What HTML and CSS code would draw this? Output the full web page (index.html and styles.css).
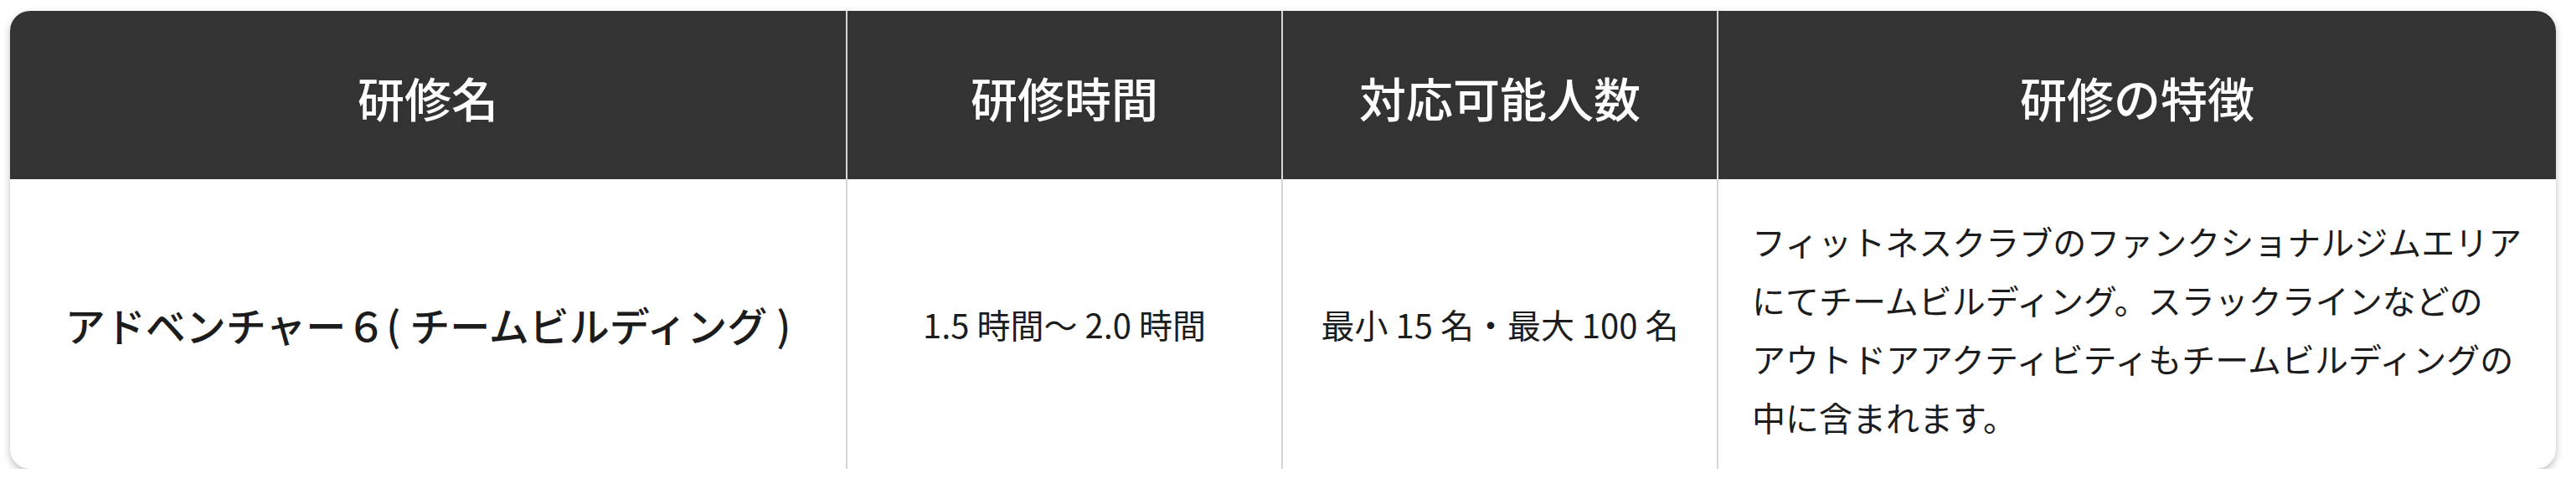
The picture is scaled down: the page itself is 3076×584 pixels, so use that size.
FILE: index.html
```html
<!DOCTYPE html>
<html lang="ja">
<head>
<meta charset="utf-8">
<title>研修一覧</title>
<link rel="stylesheet" href="styles.css">
</head>
<body>
<div class="page">
  <div class="card">
    <table class="course-table">
      <colgroup>
        <col class="col-name">
        <col class="col-time">
        <col class="col-people">
        <col class="col-feature">
      </colgroup>
      <thead>
        <tr>
          <th>研修名</th>
          <th>研修時間</th>
          <th>対応可能人数</th>
          <th>研修の特徴</th>
        </tr>
      </thead>
      <tbody>
        <tr>
          <td class="name">アドベンチャー６( チームビルディング )</td>
          <td class="meta">1.5 時間〜 2.0 時間</td>
          <td class="meta">最小 15 名・最大 100 名</td>
          <td class="feature">フィットネスクラブのファンクショナルジムエリア<br>にてチームビルディング。スラックラインなどの<br>アウトドアアクティビティもチームビルディングの<br>中に含まれます。</td>
        </tr>
      </tbody>
    </table>
  </div>
</div>
</body>
</html>
```
FILE: styles.css
```css
html, body {
  margin: 0;
  padding: 0;
  background: #ffffff;
}

body {
  font-family: "Noto Sans CJK JP", "Noto Sans", sans-serif;
  color: #1c1c1c;
}

.page {
  padding: 13px 24px 0 12px;
}

.card {
  width: 3040px;
  border-radius: 24px;
  overflow: hidden;
  background: #ffffff;
  box-shadow: 0 4px 10px rgba(0, 0, 0, 0.25);
}

.course-table {
  width: 3040px;
  border-collapse: collapse;
  border-spacing: 0;
  table-layout: fixed;
}

.col-name { width: 999px; }
.col-time { width: 520px; }
.col-people { width: 520px; }
.col-feature { width: 1001px; }

.course-table th,
.course-table td {
  padding: 0;
  text-align: center;
  vertical-align: middle;
  border-left: 2px solid #d6d6d6;
}

.course-table th:first-child,
.course-table td:first-child {
  border-left: none;
}

.course-table th {
  height: 201px;
  background: #333333;
  color: #ffffff;
  font-size: 56px;
  font-weight: 500;
  line-height: 1.4;
  padding-top: 6px;
  box-sizing: border-box;
}

.course-table td {
  height: 345px;
  box-sizing: border-box;
}

.name {
  font-size: 48px;
  font-weight: 500;
  line-height: 1.5;
}

.meta {
  font-size: 40px;
  font-weight: 400;
  line-height: 1.5;
}

.course-table td.feature {
  text-align: left;
  font-size: 40px;
  font-weight: 400;
  line-height: 70px;
  padding: 39px 30px 27px 40px;
  white-space: nowrap;
}
```
